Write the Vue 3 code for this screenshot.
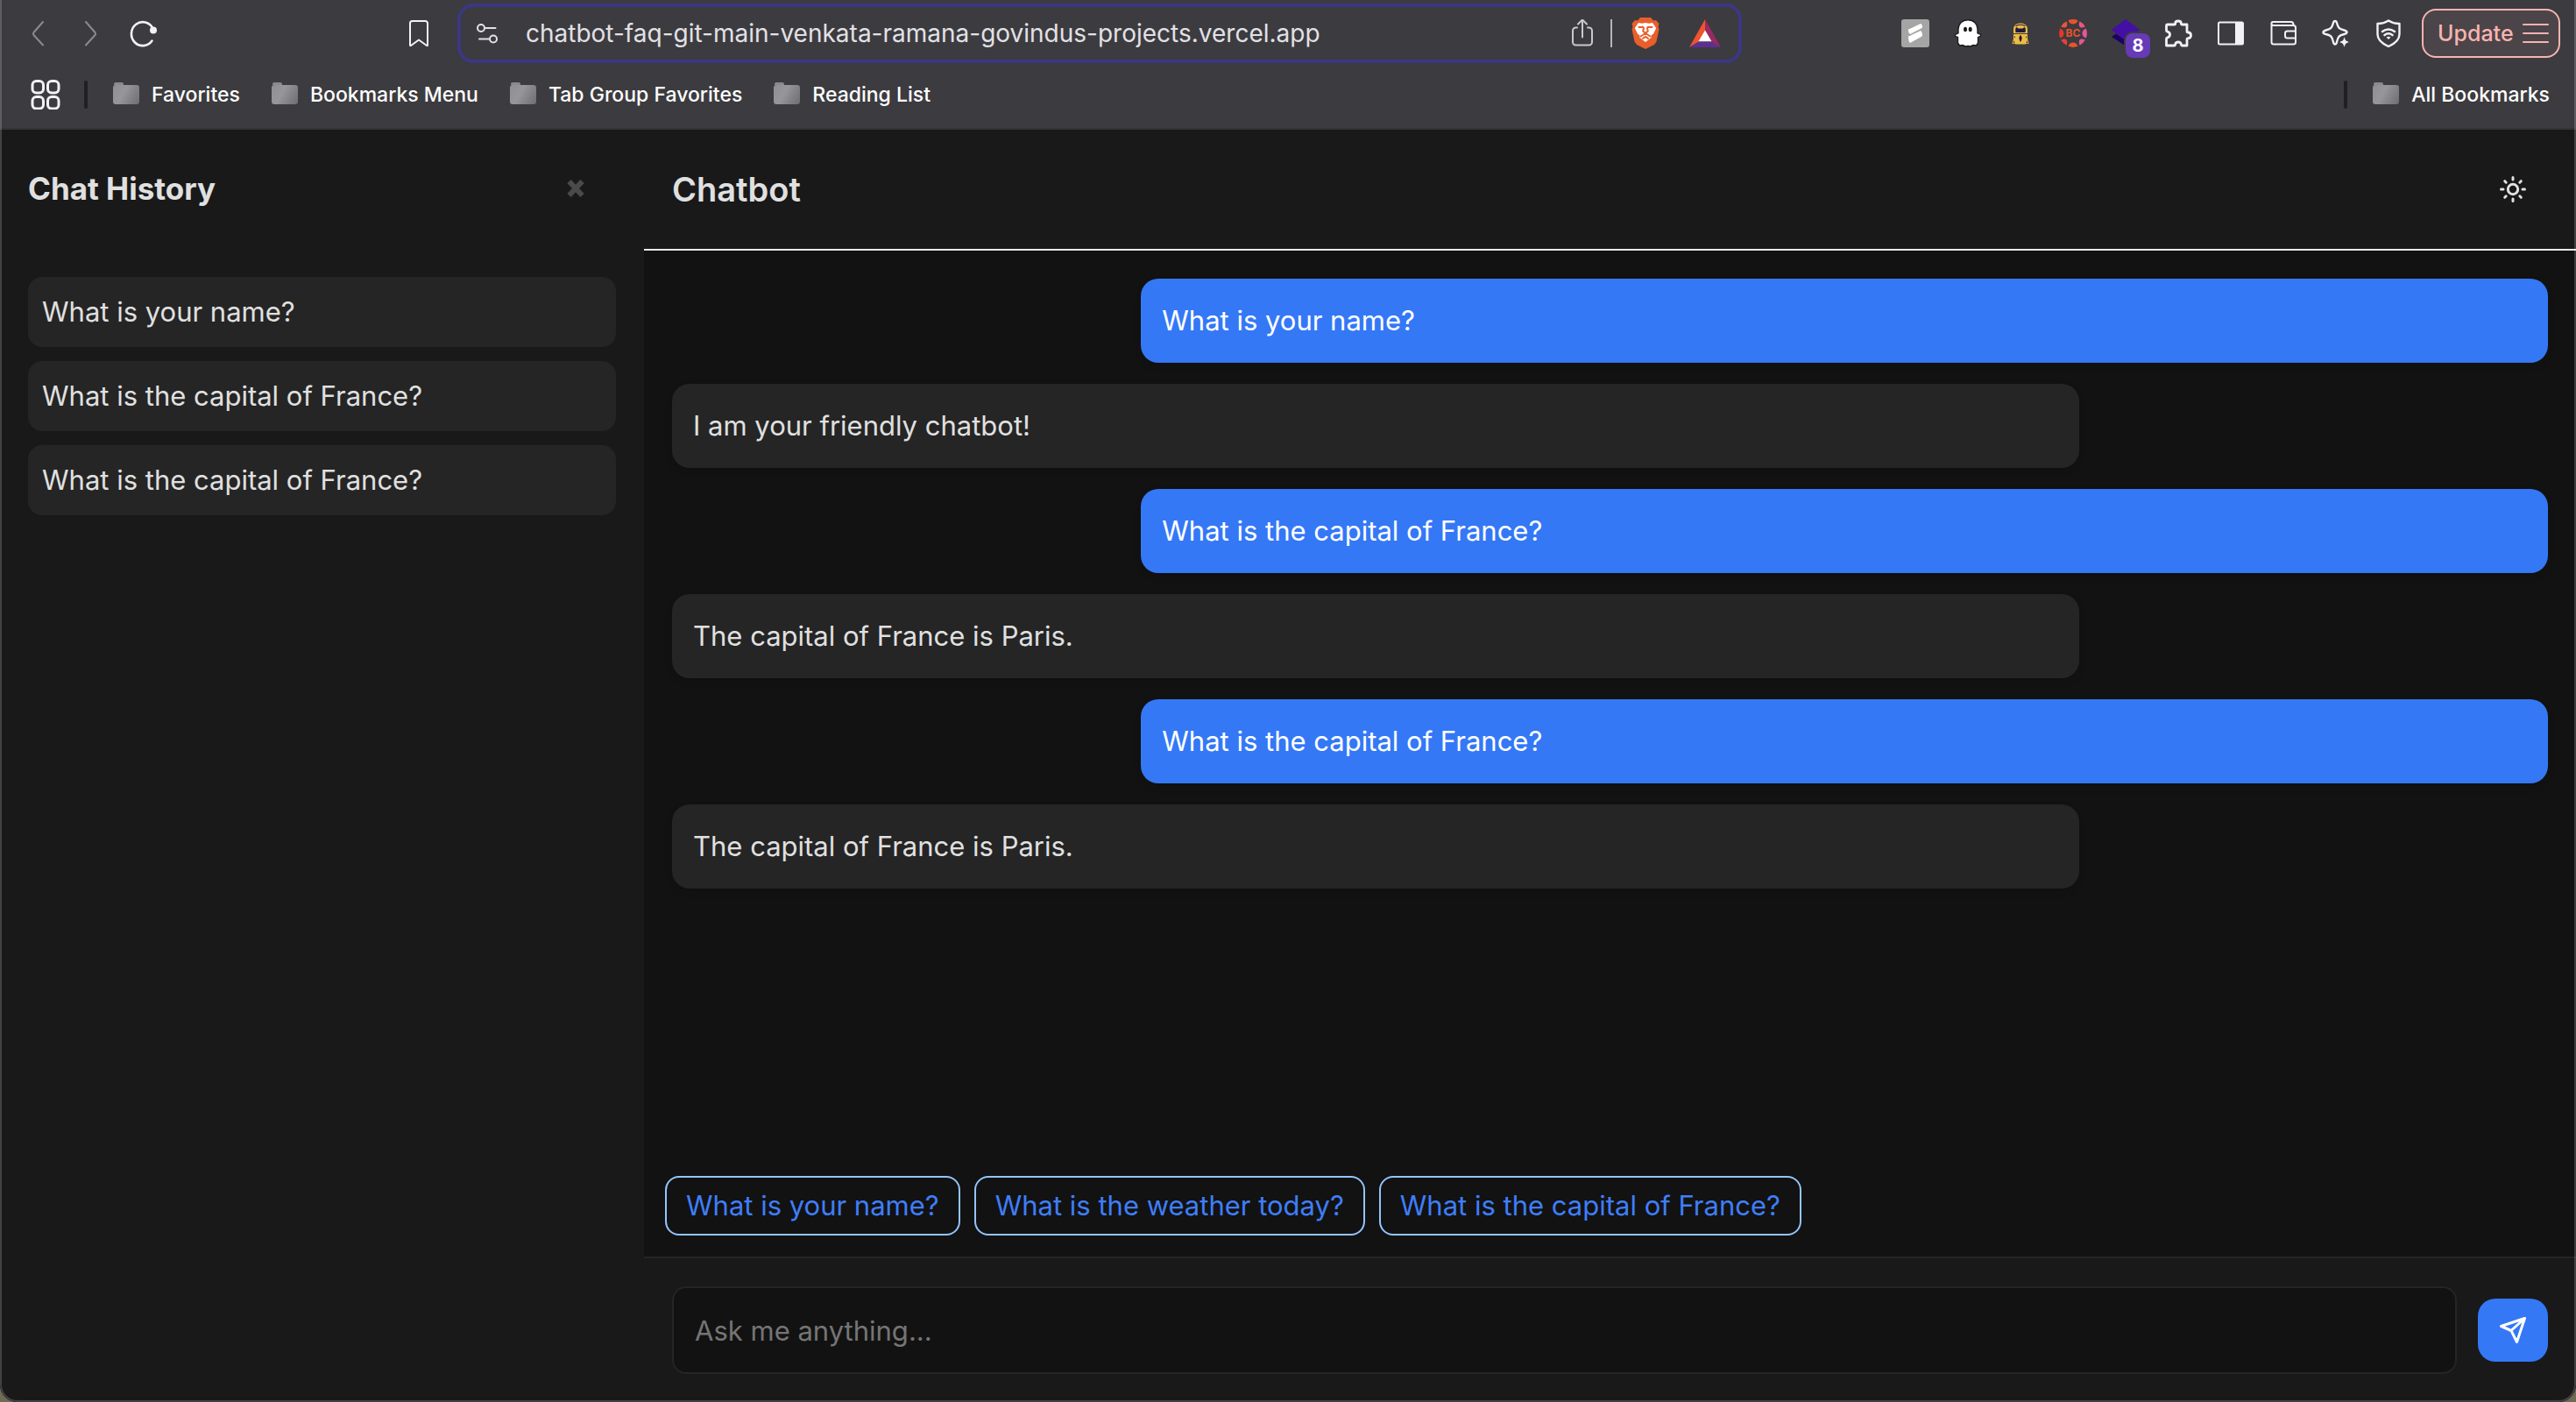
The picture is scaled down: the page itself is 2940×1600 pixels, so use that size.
<script setup>
import { ref } from 'vue'

const url = ref('chatbot-faq-git-main-venkata-ramana-govindus-projects.vercel.app')
const draft = ref('')

const bookmarks = ['Favorites', 'Bookmarks Menu', 'Tab Group Favorites', 'Reading List']

const history = [
  'What is your name?',
  'What is the capital of France?',
  'What is the capital of France?',
]

const messages = [
  { from: 'user', text: 'What is your name?' },
  { from: 'bot', text: 'I am your friendly chatbot!' },
  { from: 'user', text: 'What is the capital of France?' },
  { from: 'bot', text: 'The capital of France is Paris.' },
  { from: 'user', text: 'What is the capital of France?' },
  { from: 'bot', text: 'The capital of France is Paris.' },
]

const suggestions = [
  'What is your name?',
  'What is the weather today?',
  'What is the capital of France?',
]
</script>

<template>
  <div class="window">
    <header class="browser">
      <div class="toolbar">
        <button class="tool dim" aria-label="Back">
          <svg viewBox="0 0 32 32"><path d="M21 3 10.500 15q-1 1.500 0 3L21 29.500" /></svg>
        </button>
        <button class="tool dim" aria-label="Forward">
          <svg viewBox="0 0 32 32"><path d="M10 3l10.500 12q1 1.500 0 3L10 29.500" /></svg>
        </button>
        <button class="tool" aria-label="Reload">
          <svg viewBox="0 0 32 32">
            <path d="M25.500 24.500A13 13.500 0 1 1 26.500 10.500" stroke-width="2.600" />
            <circle cx="27" cy="12.500" r="4" fill="currentColor" stroke="none" />
          </svg>
        </button>
        <span class="gap-left"></span>
        <button class="tool bookmark" aria-label="Bookmark this page">
          <svg viewBox="0 0 32 32"><path d="M8.500 2h15A2.500 2.500 0 0 1 26 4.500V29.500q0 1.200-1 .5l-9-6.500L7 30q-1 .7-1-.5V4.500A2.500 2.500 0 0 1 8.500 2z" /></svg>
        </button>

        <div class="address">
          <button class="site-info" aria-label="Site information">
            <svg viewBox="0 0 28 28">
              <circle cx="7" cy="8" r="4" /><path d="M12 8h11.500M5 20.500h11" />
              <circle cx="21" cy="20.500" r="4" />
            </svg>
          </button>
          <input v-model="url" class="url" type="text" aria-label="Address" spellcheck="false" />
          <button class="share" aria-label="Share">
            <svg viewBox="0 0 32 32">
              <path d="M10 9.500H8.500A3.500 3.500 0 0 0 5 13v13a3.500 3.500 0 0 0 3.500 3.500h15A3.500 3.500 0 0 0 27 26V13a3.500 3.500 0 0 0-3.500-3.500H22M16 20.500V1M11 5.500l5-5 5 5" />
            </svg>
          </button>
          <span class="address-rule"></span>
          <button class="shields" aria-label="Brave Shields">
            <svg viewBox="0 0 32 36">
              <path fill="#e95f2b" d="M10 0h12l3 3.500 3-.5 3.500 4-1 3.500 1 3-3 14-2.500 3.500L16 36 6 31l-2.500-3.500-3-14 1-3-1-3.500L4 3l3 .5z" />
              <path fill="#fff" d="M8 6l4 .8L16 6l4 .8 4-.8 4.200 6-1.200 2.500-2 4L22 21l1 1.500-7 5.500-7-5.500 1-1.500-3-2.500-2-4L3.800 12z" />
              <path class="face" stroke="#e95f2b" d="M8.500 11l4.500-.3 1 1.300-.8 3.500L16 18l2.800-2.500L18 12l1-1.300 4.500.3M10.500 21.500l5.500-3.500 5.500 3.500M13 23.800l3-2 3 2" />
            </svg>
          </button>
          <button class="rewards" aria-label="Brave Rewards">
            <svg viewBox="0 0 36 32">
              <path fill="#f0532f" d="M18 0v13L11 25.500 0 32z" />
              <path fill="#972a61" d="M18 0v13l7 12.500L36 32z" />
              <path fill="#5d3090" d="M0 32l11-6.500h14L36 32z" />
              <path fill="#fff" d="M18 12.500l7.500 12.800h-15z" />
            </svg>
          </button>
        </div>
        <span class="gap-right"></span>

        <button class="tool" aria-label="Scribe">
          <svg viewBox="0 0 32 32">
            <rect width="32" height="32" rx="3" fill="#a5a5a5" stroke="none" />
            <path fill="#fff" stroke="#fff" stroke-width="1" d="M8.500 12 22 5.500q1.500 0 1.500 4L10 16.500q-1.500-.5-1.500-4.500zM8.500 20l13.500-6.500q1.500 1 1.500 5.500L10 26.500q-1.500-1-1.500-6.500z" />
          </svg>
        </button>
        <button class="tool" aria-label="Ghostery">
          <svg viewBox="0 0 32 32">
            <path fill="#fff" stroke="#1d1d1f" stroke-width="1.400" d="M16 .8c6.500 0 11 4.500 11 10.500v4.500l3.500 1.500c.5 2-1 3-3 3.200v6.500l-2 3-3.500-.5-3 1.500-3-.5-3 .5-3-1.500-3.500.5-2-3v-6.500c-2-.2-3.500-1.200-3-3.200L5 15.800v-4.500C5 5.300 9.500.8 16 .8z" />
            <ellipse cx="13" cy="11.500" rx="2" ry="2.800" fill="#1d1d1f" stroke="none" />
            <ellipse cx="18.700" cy="11.500" rx="2" ry="2.800" fill="#1d1d1f" stroke="none" />
          </svg>
        </button>
        <button class="tool" aria-label="Password lock">
          <svg viewBox="0 0 32 32">
            <path fill="#edbe45" stroke="none" d="M8 16v-4q0-7.500 8-7.500t8 7.500v4z" />
            <path fill="#201b3c" stroke="none" d="M10.500 15q-1-5 1-6l2 1.500h5l2-1.500q2 1 1 6z" />
            <path stroke="#201b3c" stroke-width="1.200" d="M11 7.500q5-2.500 10 0" />
            <path fill="#edbe45" stroke="none" d="M8 17h16v5l1.500 6h-3l-1 .5h-11l-1-.5h-3L8 22z" />
            <path fill="#201b3c" stroke="none" d="M15.200 18.500h1.600l1 3-1.300 4h-1l-1.300-4zM9 19l1 1-1 2zM23 19l-1 1 1 2zM8 24l1.500 3-1.500.5zM24 24l-1.500 3 1.500.5z" />
          </svg>
        </button>
        <button class="tool" aria-label="BC">
          <svg viewBox="0 0 32 32">
            <g stroke="none">
              <path fill="#e9532a" d="M10.500 1.200Q16-1 21.500 1.200 20 5.500 16 5.500t-5.500-4.300zM10.500 30.800Q16 33 21.500 30.800 20 26.500 16 26.500t-5.500 4.300z" />
              <path fill="#e8352f" d="M1.200 10.500Q-1 16 1.200 21.500 5.500 20 5.500 16t-4.300-5.500z" />
              <path fill="#e9543f" d="M2.200 8.500Q4.500 4 8.500 2.200 10 6.500 8.500 8.500T2.200 8.500z" />
              <path fill="#e9403a" d="M2.200 23.500Q4.500 28 8.500 29.800 10 25.500 8.500 23.500t-6.300 0z" />
              <path fill="#ea5580" d="M29.800 8.500Q27.500 4 23.500 2.200 22 6.500 23.500 8.500t6.300 0z" />
              <path fill="#e9569b" d="M30.800 10.500Q33 16 30.800 21.500 26.500 20 26.500 16t4.300-5.500z" />
              <path fill="#e4568f" d="M29.800 23.500Q27.500 28 23.500 29.800 22 25.500 23.500 23.500t6.300 0z" />
            </g>
            <text class="bc" x="16" y="20" text-anchor="middle">BC</text>
          </svg>
        </button>
        <button class="tool" aria-label="Layers, 8 notifications">
          <svg viewBox="0 0 32 32">
            <path fill="#1b0068" stroke="none" d="M0 20 5 16.500l11 7.500v6.500z" />
            <path fill="#430fa5" stroke="none" d="M16 0 32 12 16 24 0 12z" />
          </svg>
          <span class="badge">8</span>
        </button>
        <button class="tool" aria-label="Extensions">
          <svg viewBox="0 0 32 32">
            <path stroke-width="2.800" d="M4 6h7.500q1.200 0 1.200-1.200 0-2.800 3.300-2.800t3.300 2.800q0 1.200 1.200 1.200H26v7.500q0 1.500 1.300 1.500 3.200 0 3.200 3.300T27.300 21.700q-1.300 0-1.300 1.500V30h-5.500q-1 0-1.200-1.500-.5-2.500-3.300-2.500t-3.300 2.500Q12.500 30 11.500 30H2.500v-7.500q0-1.300 1.300-1.700Q6.500 20 6.500 17.500T3.800 14.200Q2.500 13.800 2.500 12.500V7.500Q2.500 6 4 6z" />
          </svg>
        </button>
        <button class="tool" aria-label="Sidebar">
          <svg viewBox="0 0 32 32">
            <rect x="2" y="3.500" width="28" height="25" rx="1.500" />
            <path fill="currentColor" stroke="none" d="M21 3h9v26h-9z" />
          </svg>
        </button>
        <button class="tool" aria-label="Wallet">
          <svg viewBox="0 0 32 32">
            <path d="M2.500 4.500q0-1.500 1.500-1.500h21q2.500 0 2.500 3.500M2.500 4.500V26q0 2.500 2.500 2.500h22.500q2.500 0 2.500-2.500V9.500Q30 7 27.500 7H4.500q-2 0-2-2.500zM30 13.500H20.500q-2.500 0-2.500 2.500v3q0 2.500 2.500 2.500H30" />
          </svg>
        </button>
        <button class="tool" aria-label="Leo AI">
          <svg viewBox="0 0 32 32">
            <path stroke-width="2.400" d="M15 2q1.500 0 2 2c1.500 6 2.500 7 8.500 8.500q3.500 1 3 2.500t-3 2C19.500 18.500 18.500 19.500 17 26q-.5 2.500-2 2.500t-2-2.500c-1.500-6.500-2.500-7.500-8.500-9q-3-.5-3-2t3-2.500C10.500 11 11.500 10 13 4q.5-2 2-2z" />
            <path fill="currentColor" stroke="#3c3b3f" stroke-width="1" d="M25.500 19.500l2 4.500 4.500 2-4.500 2-2 4.500-2-4.500-4.500-2 4.500-2z" />
          </svg>
        </button>
        <button class="tool" aria-label="VPN">
          <svg viewBox="0 0 32 32">
            <path stroke-width="2.400" d="M16 1.500Q21 4.800 28.500 5v12q0 8.500-12.500 14Q3.500 25.500 3.500 17V5Q11 4.800 16 1.500z" />
            <path d="M9 14q7-5 14 0M11.500 18q4.500-3.500 9 0" stroke-width="2.600" />
            <path fill="currentColor" stroke="none" d="M13.500 20.500q2.500-1.500 5 0L16 23z" />
          </svg>
        </button>

        <button class="update">
          <span>Update</span>
          <svg viewBox="0 0 30 24"><path d="M1 2h28M1 12h28M1 22h28" /></svg>
        </button>
      </div>

      <nav class="bookmarks" aria-label="Bookmarks">
        <button class="apps" aria-label="Apps">
          <svg viewBox="0 0 34 34">
            <rect x="2" y="1.500" width="12.500" height="13.500" rx="4.500" />
            <rect x="19.500" y="1.500" width="12.500" height="13.500" rx="4.500" />
            <rect x="2" y="19.500" width="12.500" height="13.500" rx="4.500" />
            <rect x="19.500" y="19.500" width="12.500" height="13.500" rx="4.500" />
          </svg>
        </button>
        <span class="rule"></span>
        <a v-for="name in bookmarks" :key="name" href="#" class="folder"><i></i>{{ name }}</a>
        <span class="rule last"></span>
        <a href="#" class="folder"><i></i>All Bookmarks</a>
      </nav>
    </header>

    <div class="app">
      <aside class="sidebar">
        <div class="sidebar-head">
          <h2>Chat History</h2>
          <button class="close" aria-label="Close history">
            <svg viewBox="0 0 20 20"><path d="M2.500 2l15 16M17.500 2l-15 16" /></svg>
          </button>
        </div>
        <ul class="history">
          <li v-for="(item, i) in history" :key="i"><button>{{ item }}</button></li>
        </ul>
      </aside>

      <main class="chat">
        <div class="chat-head">
          <h1>Chatbot</h1>
          <button class="theme" aria-label="Switch theme">
            <svg viewBox="0 0 32 32">
              <circle cx="16" cy="16" r="5.700" />
              <path d="M16 2.500v2.500M16 27v2.500M2.500 16H5M27 16h2.500M6.700 6.700l1.500 1.500M23.800 23.800l1.500 1.500M6.700 25.300l1.500-1.500M23.800 8.200l1.500-1.500" />
            </svg>
          </button>
        </div>

        <div class="messages">
          <p v-for="(m, i) in messages" :key="i" class="message" :class="m.from">{{ m.text }}</p>
        </div>

        <div class="suggestions">
          <button v-for="s in suggestions" :key="s">{{ s }}</button>
        </div>

        <form class="composer" @submit.prevent>
          <input v-model="draft" type="text" placeholder="Ask me anything..." aria-label="Message" />
          <button class="send" aria-label="Send">
            <svg viewBox="0 0 32 32"><path d="M29.500 2.500 2.500 11.500l11.500 5L20.500 29.500zM29.500 2.500 14 16.500" /></svg>
          </button>
        </form>
      </main>
    </div>
  </div>
</template>

<style>
body {
  background: #6e6a55;
}
</style>

<style scoped>
* {
  box-sizing: border-box;
}

.window {
  position: relative;
  display: flex;
  flex-direction: column;
  min-height: 100vh;
  overflow: hidden;
  border-radius: 0 0 20px 20px;
  background: #121212;
  color: #e0e0e0;
  font-family: Inter, "Liberation Sans", sans-serif;
  font-size: 31px;
}

/* thin light edge around the browser window */
.window::after {
  content: "";
  position: absolute;
  inset: 0;
  border: 2px solid rgba(255, 255, 255, 0.18);
  border-top: 0;
  border-radius: 0 0 20px 20px;
  pointer-events: none;
}

button,
input {
  margin: 0;
  padding: 0;
  border: 0;
  background: none;
  color: inherit;
  font: inherit;
}

button {
  cursor: pointer;
}

svg {
  display: block;
  fill: none;
  stroke: currentColor;
  stroke-width: 2;
  stroke-linecap: round;
  stroke-linejoin: round;
}

.browser {
  background: #3c3b3f;
  border-bottom: 2px solid #343437;
  color: #f2f2f4;
}

.toolbar {
  display: flex;
  align-items: center;
  height: 76px;
  padding: 0 18px 0 14px;
}

.tool {
  position: relative;
  display: grid;
  place-items: center;
  flex: none;
  width: 60px;
  height: 60px;
}

.tool svg {
  width: 32px;
  height: 32px;
}

.dim {
  color: #8b8a8e;
}

.gap-left {
  flex: 254 1 0;
}

.gap-right {
  flex: 168 1 0;
}

.bookmark {
  margin-right: 14px;
}

.address {
  display: flex;
  align-items: center;
  flex: 1422 1 44px;
  min-width: 0;
  height: 68px;
  padding: 0 20px 0 16px;
  border: 4px solid #3b3882;
  border-radius: 18px;
  color: #c9c8cd;
}

.site-info {
  color: #e2e1e6;
}

.site-info svg {
  width: 28px;
  height: 28px;
}

.url {
  flex: 1;
  min-width: 0;
  margin-left: 30px;
  color: #e2e1e6;
  font-size: 28px;
  line-height: 40px;
  outline: none;
}

.share svg {
  width: 32px;
  height: 32px;
}

.address-rule {
  width: 2px;
  height: 32px;
  margin: 0 22px 0 16px;
  background: #b5b4b9;
}

.shields svg {
  width: 32px;
  height: 36px;
}

.rewards {
  margin-left: 34px;
}

.rewards svg {
  width: 36px;
  height: 32px;
}

.shields path,
.rewards path {
  stroke-width: 0;
}

.shields .face {
  stroke-width: 2;
}

.bc {
  fill: #e9532a;
  stroke: none;
  font-size: 12px;
  font-weight: 700;
}

.badge {
  position: absolute;
  right: 2px;
  bottom: 2px;
  width: 28px;
  height: 28px;
  border-radius: 8px;
  background: #673ab7;
  box-shadow: 0 0 0 2px #3c3b3f;
  color: #fff;
  font-size: 20px;
  font-weight: 700;
  line-height: 28px;
  text-align: center;
}

.update {
  display: flex;
  align-items: center;
  justify-content: space-between;
  flex: none;
  width: 158px;
  height: 56px;
  margin-left: 8px;
  padding: 0 11px 0 16px;
  border: 2px solid #f7b4b1;
  border-radius: 16px;
  background: #4b4448;
  color: #f7b4b1;
  font-size: 25px;
  font-weight: 500;
}

.update svg {
  width: 30px;
  height: 24px;
}

.bookmarks {
  display: flex;
  align-items: center;
  height: 70px;
  padding: 0 30px 6px 35px;
  font-size: 23px;
  font-weight: 500;
}

.apps svg {
  width: 34px;
  height: 34px;
  stroke-width: 3;
}

.rule {
  width: 4px;
  height: 32px;
  margin: 0 29px 0 27px;
  border-radius: 2px;
  background: #1f1f24;
}

.last {
  margin-left: auto;
}

.folder {
  display: flex;
  align-items: center;
  gap: 14px;
  color: #fff;
  line-height: 32px;
  text-decoration: none;
}

.folder + .folder {
  margin-left: 36px;
}

.folder i {
  position: relative;
  width: 30px;
  height: 22px;
  border-radius: 3px;
  background: linear-gradient(120deg, #8e8e93, #96969b 40%, #6e6e70);
}

.folder i::before {
  content: "";
  position: absolute;
  left: 1px;
  top: -3px;
  width: 11px;
  height: 3px;
  border-radius: 2px 2px 0 0;
  background: #8a8a8c;
}

.app {
  display: flex;
  flex: 1;
}

.sidebar {
  flex: 0 0 25%;
  padding: 32px;
  background: #191919;
}

.sidebar-head {
  display: flex;
  align-items: center;
  justify-content: space-between;
  height: 70px;
  margin-bottom: 66px;
}

h1,
h2 {
  margin: 0;
}

h2 {
  font-size: 35px;
  font-weight: 700;
}

h1 {
  font-size: 38px;
  font-weight: 600;
}

.close {
  padding-right: 36px;
  color: #4a4a4a;
}

.close svg {
  width: 20px;
  height: 20px;
  stroke-width: 6;
  stroke-linecap: butt;
}

.history {
  display: grid;
  gap: 16px;
  margin: 0;
  padding: 0;
  list-style: none;
}

.history button {
  display: block;
  width: 100%;
  padding: 16px;
  border-radius: 16px;
  background: #252525;
  line-height: 48px;
  text-align: left;
}

.chat {
  display: flex;
  flex-direction: column;
  flex: 1;
  min-width: 0;
}

.chat-head {
  display: flex;
  align-items: center;
  justify-content: space-between;
  height: 138px;
  padding: 0 56px 0 32px;
  border-bottom: 2px solid #e8e8e6;
  background: #191919;
}

.theme svg {
  width: 32px;
  height: 32px;
  stroke-width: 3;
}

.messages {
  display: flex;
  flex: 1;
  flex-direction: column;
  gap: 24px;
  padding: 32px;
}

.message {
  width: 75%;
  margin: 0;
  padding: 24px;
  border-radius: 20px;
  box-shadow: 0 4px 8px rgba(0, 0, 0, 0.1);
  line-height: 48px;
}

.bot {
  background: #252525;
}

.user {
  align-self: flex-end;
  background: #3478f6;
  color: #fff;
}

.suggestions {
  display: flex;
  flex-wrap: wrap;
  gap: 16px;
  padding: 24px;
}

.suggestions button {
  padding: 8px 22px;
  border: 2px solid #93c5fd;
  border-radius: 16px;
  color: #3f7efa;
  line-height: 48px;
}

.composer {
  display: flex;
  align-items: center;
  gap: 24px;
  padding: 32px;
  border-top: 2px solid #252525;
  background: #191919;
}

.composer input {
  flex: 1;
  min-width: 0;
  height: 100px;
  padding: 0 24px;
  border: 2px solid #252525;
  border-radius: 16px;
  background: #121212;
  outline: none;
}

.composer input::placeholder {
  color: #757575;
  opacity: 1;
}

.send {
  display: grid;
  place-items: center;
  width: 80px;
  height: 72px;
  border-radius: 20px;
  background: #3478f6;
  color: #fff;
}

.send svg {
  width: 32px;
  height: 32px;
  stroke-width: 3;
}
</style>
